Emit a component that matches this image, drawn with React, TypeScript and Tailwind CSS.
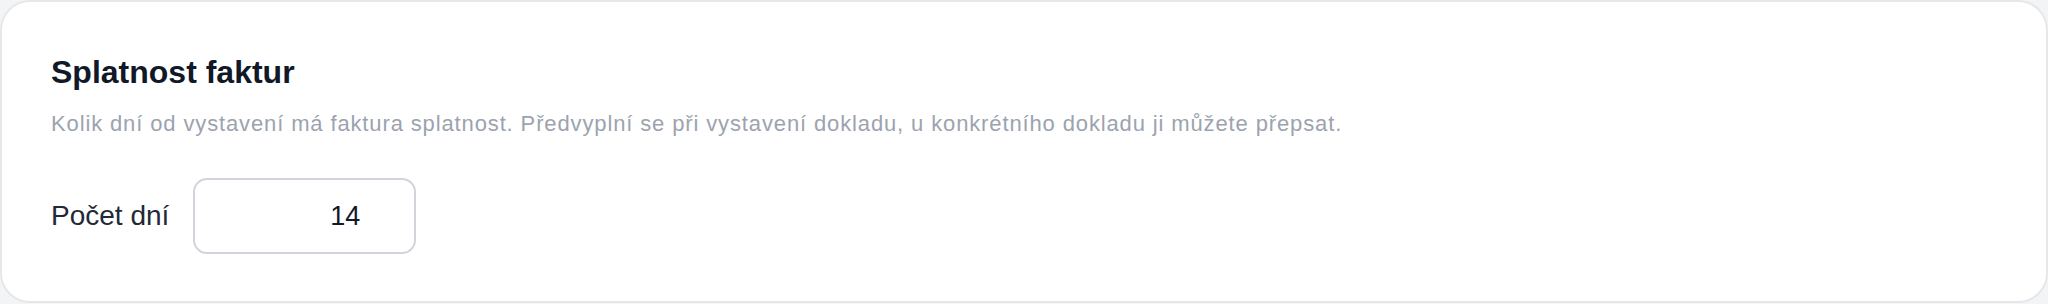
export default function App() {
  return (
    <div className="h-[304px] w-full bg-[#f3f4f6] font-['Liberation_Sans',Arial,sans-serif]">
      <div className="box-border flex h-[303px] flex-col rounded-[30px] border-2 border-[#e5e7eb] bg-white px-[49px] pt-[50px]">
        {/* Nadpis sekce */}
        <h2 className="text-[32px] font-bold leading-[40px] text-[#111827]">Splatnost faktur</h2>
        <p className="mt-[17px] text-[22px] leading-[30px] tracking-[0.87px] text-[#9ca3af]">
          Kolik dní od vystavení má faktura splatnost. Předvyplní se při vystavení dokladu, u konkrétního dokladu ji můžete přepsat.
        </p>

        {/* Počet dní */}
        <div className="mt-[39px] flex items-center gap-[24px]">
          <label className="text-[28px] leading-[34px] text-[#1f2937]">Počet dní</label>
          <input
            type="text"
            defaultValue="14"
            className="box-border h-[76px] w-[223px] rounded-[14px] border-2 border-[#d1d5db] bg-white pr-[54px] text-right text-[27px] text-[#111827] outline-none"
          />
        </div>
      </div>
    </div>
  );
}
